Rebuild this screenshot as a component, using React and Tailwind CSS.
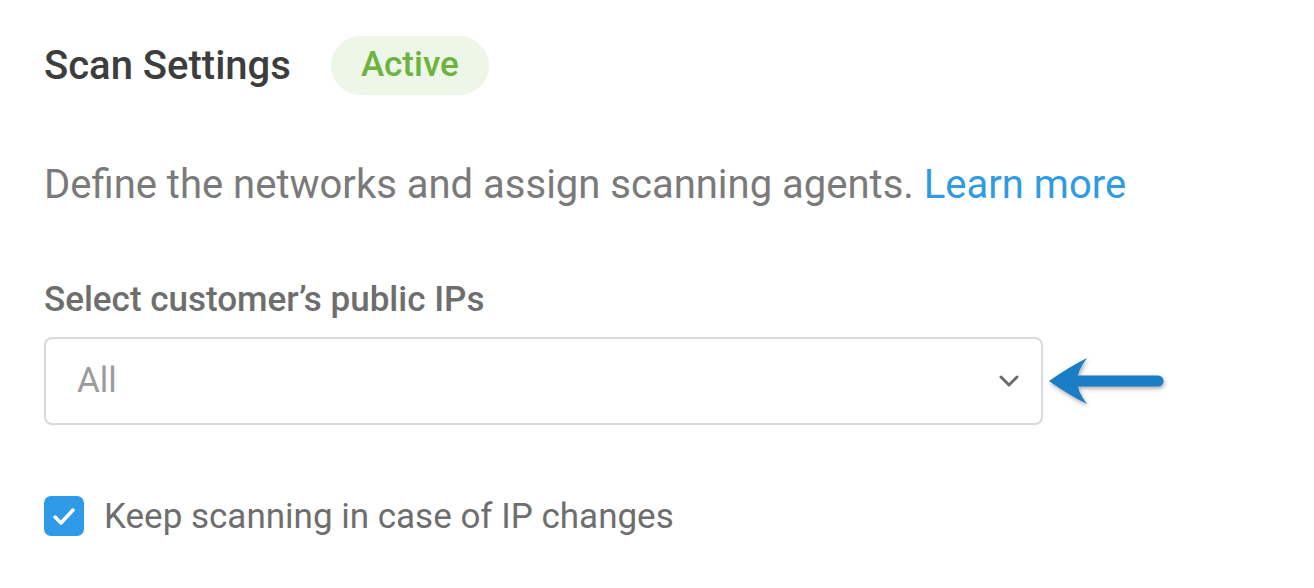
const App = () => {
  return (
    <div className="w-[1314px] h-[588px] bg-white pl-[44px] pt-[36px] font-['Roboto',sans-serif]">

      {/* Header */}
      <div className="flex items-center gap-[40px]">
        <h1 className="text-[40px] font-medium text-[#3d3d3d] leading-none">Scan Settings</h1>
        <span className="h-[59px] px-[30px] flex items-center rounded-full bg-[#eef6e8] text-[#6cb33f] text-[35px] font-medium">
          Active
        </span>
      </div>

      {/* Description */}
      <p className="mt-[70px] text-[40px] text-[#7a7a7a] leading-none">
        Define the networks and assign scanning agents.{" "}
        <a className="text-[#2f9be3]">Learn more</a>
      </p>

      {/* Select */}
      <div className="mt-[77px] text-[35px] font-medium text-[#6e6e6e] leading-none">
        Select customer’s public IPs
      </div>
      <div className="mt-[20px] flex items-center">
        <div className="w-[999px] h-[88px] border-2 border-[#d9d9d9] rounded-[8px] flex items-center justify-between pl-[31px] pr-[21px]">
          <span className="text-[35px] text-[#9b9b9b]">All</span>
          <svg width="22" height="14" viewBox="0 0 22 14" fill="none">
            <path d="M3 3l8 8 8-8" stroke="#6b6b6b" strokeWidth="3" strokeLinecap="round" strokeLinejoin="round" />
          </svg>
        </div>
        <svg width="124" height="56" viewBox="0 0 124 56" className="ml-[2px] drop-shadow-[1px_2px_2px_rgba(0,0,0,0.35)]">
          <path d="M30 28 H113" stroke="#1b7ec4" strokeWidth="11" strokeLinecap="round" />
          <path d="M4 28 Q24 14 42 5 Q32 18 32 28 Q32 38 42 51 Q24 42 4 28 Z" fill="#1b7ec4" />
        </svg>
      </div>

      {/* Checkbox */}
      <label className="mt-[71px] flex items-center gap-[20px]">
        <span className="w-[40px] h-[40px] rounded-[7px] bg-[#2f9be8] flex items-center justify-center">
          <svg width="40" height="40" viewBox="0 0 40 40" fill="none">
            <path d="M11 21l6 6L29 14" stroke="white" strokeWidth="3.5" strokeLinecap="round" strokeLinejoin="round" />
          </svg>
        </span>
        <span className="text-[35px] text-[#6e6e6e] leading-none">Keep scanning in case of IP changes</span>
      </label>

    </div>
  );
};

export default App;
